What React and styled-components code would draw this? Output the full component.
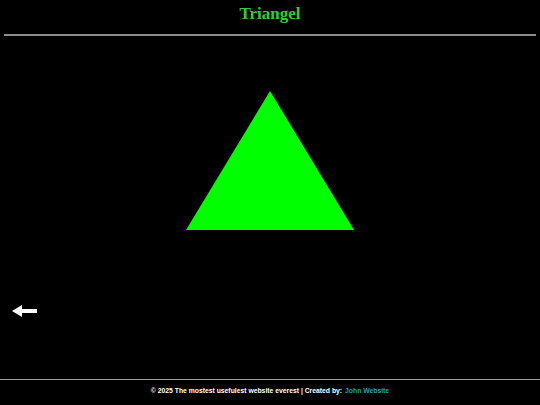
import React from "react";
import styled, { createGlobalStyle } from "styled-components";

const GlobalStyle = createGlobalStyle`
  html, body {
    margin: 0;
    padding: 0;
    background: #000;
  }
`;

const Page = styled.div`
  min-height: 100vh;
  display: flex;
  flex-direction: column;
  background: #000;
`;

const Header = styled.header`
  display: flex;
  flex-direction: column;
`;

const Title = styled.h1`
  margin: 0;
  padding-top: 5px;
  height: 29px;
  text-align: center;
  font-family: "Liberation Serif", serif;
  font-weight: bold;
  font-size: 17px;
  line-height: 17px;
  color: #32cd32;
`;

const Divider = styled.div`
  margin: 0 4px;
  border-top: 2px solid #8c8c8c;
`;

const Main = styled.main`
  flex: 1;
  display: flex;
  flex-direction: column;
  padding-top: 55px;
`;

const Triangle = styled.div`
  align-self: center;
  width: 0;
  height: 0;
  border-left: 84px solid transparent;
  border-right: 84px solid transparent;
  border-bottom: 139px solid #00ff00;
`;

const BackLink = styled.a`
  display: flex;
  margin: 75px 0 0 12px;
  width: 26px;
  cursor: pointer;
`;

const Footer = styled.footer`
  border-top: 1px solid #a0a0a0;
  height: 20px;
  padding-bottom: 5px;
  display: flex;
  align-items: center;
  justify-content: center;
  font-family: "Liberation Sans", Arial, sans-serif;
  font-weight: bold;
  font-size: 6.8px;
  color: #fff;
`;

const Author = styled.span`
  color: #17a2b8;
  margin-left: 3px;
`;

const ArrowLeft = () => (
  <svg width="26" height="12" viewBox="0 0 26 12">
    <polygon points="0,6 10,0 10,4 25,4 25,8 10,8 10,12" fill="#fff" />
  </svg>
);

export default function App() {
  return (
    <Page>
      <GlobalStyle />
      <Header>
        <Title>Triangel</Title>
        <Divider />
      </Header>
      <Main>
        <Triangle />
        <BackLink>
          <ArrowLeft />
        </BackLink>
      </Main>
      <Footer>
        © 2025 The mostest usefulest website everest | Created by:
        <Author>John Website</Author>
      </Footer>
    </Page>
  );
}
